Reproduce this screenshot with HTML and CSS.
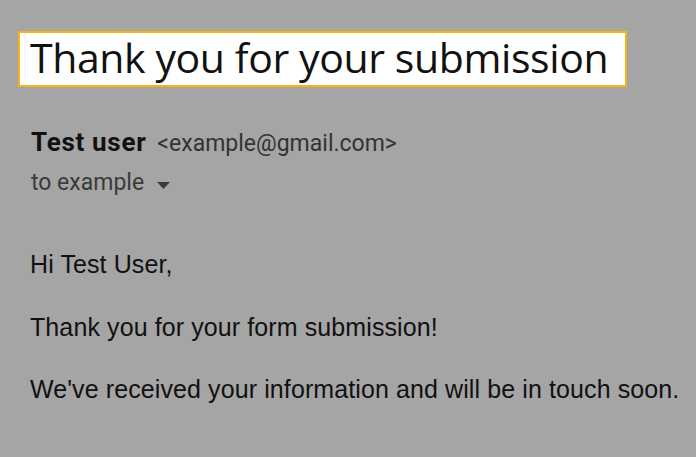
FILE: index.html
```html
<!DOCTYPE html>
<html lang="en">
<head>
  <meta charset="UTF-8"/>
  <title>Thank you for your submission</title>
  <link rel="stylesheet" href="styles.css">
</head>
<body>
  <div class="mail">
    <div class="subject">Thank you for your submission</div>

    <div class="from">
      <span class="name">Test user</span>
      <span class="address">&lt;example@gmail.com&gt;</span>
    </div>
    <div class="to">
      to example
      <svg class="caret" width="13" height="7" viewBox="0 0 13 7"><path d="M0 0h13L6.5 7z" fill="#3a3a3a"/></svg>
    </div>

    <div class="body">
      <p>Hi Test User,</p>
      <p>Thank you for your form submission!</p>
      <p>We've received your information and will be in touch soon.</p>
    </div>
  </div>
</body>
</html>
```

FILE: styles.css
```css
body {
  margin: 0;
  background-color: #a5a5a5;
  font-family: Roboto, "Liberation Sans", sans-serif;
  color: #1a1a1a;
}

.mail {
  padding: 31px 0 0 18px;
}

.subject {
  width: fit-content;
  background-color: #ffffff;
  border: 2px solid #f6b312;
  padding: 0 17px 4px 10px;
  height: 48px;
  line-height: 48px;
  font-family: "Open Sans", sans-serif;
  font-size: 41px;
  letter-spacing: -0.4px;
  color: #111;
}

.from {
  margin: 40px 0 0 13px;
  line-height: 30px;
}

.name {
  font-size: 26px;
  font-weight: bold;
  letter-spacing: 0.7px;
  color: #111;
}

.address {
  margin-left: 7px;
  font-size: 23px;
  color: #333;
}

.to {
  margin: 7px 0 0 13px;
  font-size: 23px;
  color: #3a3a3a;
  line-height: 30px;
}

.caret {
  margin-left: 7px;
  vertical-align: 1px;
}

.body {
  margin: 51px 0 0 12px;
  font-family: "Liberation Sans", Arial, sans-serif;
  font-size: 25px;
  letter-spacing: 0.1px;
  color: #111;
}

.body p {
  margin: 0 0 32.5px;
  line-height: 30px;
}
```
